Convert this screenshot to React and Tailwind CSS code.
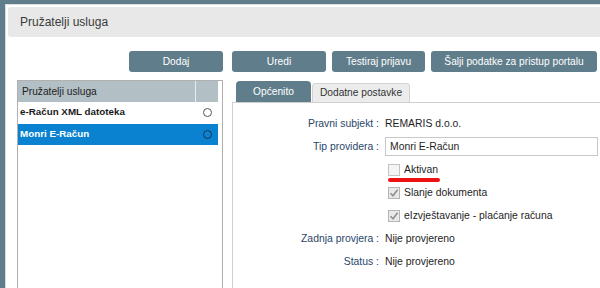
import React from 'react';

const rows = [
  { name: 'e-Račun XML datoteka', selected: false },
  { name: 'Monri E-Račun', selected: true },
];

function Checkbox({ checked }) {
  return (
    <span
      className={`w-[12px] h-[12px] border flex items-center justify-center shrink-0 ${
        checked ? 'border-[#b5b5b5] bg-[#e9e9e9]' : 'border-[#c4c4c4] bg-[#f4f4f4]'
      }`}
    >
      {checked && (
        <svg width="10" height="10" viewBox="0 0 10 10">
          <path d="M1.5 5.2 L4 7.8 L8.6 1.8" fill="none" stroke="#8f8f8f" strokeWidth="1.6" />
        </svg>
      )}
    </span>
  );
}

function Label({ children }) {
  return <div className="w-[146px] text-right text-[#2a466a] shrink-0">{children} :</div>;
}

export default function App() {
  return (
    <div className="w-[600px] h-[288px] overflow-hidden bg-[#607d8b] pl-[5px] pt-[4px] font-['Liberation_Sans',Arial,sans-serif]">
      <div className="h-[300px] bg-white border-l border-t border-[#d9dee1] pl-[2px] pt-[2px]">
        {/* Header */}
        <div className="h-[30px] bg-[#e8e8e8] rounded-l-[3px] flex items-center pl-[12px] text-[12px] text-[#3a3a3a]">
          Pružatelji usluga
        </div>

        {/* Buttons */}
        <div className="flex mt-[14px] ml-[121px] text-[10.2px] text-white">
          <button className="w-[94px] h-[21px] rounded-[3px] bg-[#607d8b]">Dodaj</button>
          <button className="w-[94px] h-[21px] rounded-[3px] bg-[#607d8b] ml-[9px]">Uredi</button>
          <button className="w-[93px] h-[21px] rounded-[3px] bg-[#607d8b] ml-[6px]">Testiraj prijavu</button>
          <button className="w-[166px] h-[21px] rounded-[3px] bg-[#607d8b] ml-[6px]">Šalji podatke za pristup portalu</button>
        </div>

        <div className="flex mt-[8px]">
          {/* Provider list */}
          <div className="ml-[9px] w-[206px] h-[220px] border border-[#b0b0b0] pr-[4px] shrink-0">
            <div className="flex h-[21px] bg-[#b2c0c6] text-[10.2px] text-[#222]">
              <div className="flex-1 flex items-center pl-[4px] border-r border-[#e6ebee]">Pružatelji usluga</div>
              <div className="w-[22px]" />
            </div>
            {rows.map((r) => (
              <div
                key={r.name}
                className={`flex items-center h-[21.5px] font-bold text-[9.8px] ${
                  r.selected ? 'bg-[#0a82cf] text-white' : 'text-[#1a1a1a]'
                }`}
              >
                <div className="flex-1 pl-[2px]">{r.name}</div>
                <div className="w-[22px] flex justify-center">
                  <span
                    className={`w-[9px] h-[9px] rounded-full border ${
                      r.selected ? 'border-[#1c3550]' : 'border-[#555] bg-white'
                    }`}
                  />
                </div>
              </div>
            ))}
          </div>

          {/* Details */}
          <div className="ml-[9px] flex-1 flex flex-col">
            <div className="flex items-end h-[22px] pl-[4px] gap-[1px] text-[10.2px]">
              <div className="w-[75px] h-[21px] rounded-t-[4px] bg-[#607d8b] text-white flex items-center justify-center">
                Općenito
              </div>
              <div className="w-[98px] h-[19px] rounded-t-[4px] bg-[#ececec] border border-b-0 border-[#d2d2d2] text-[#333] flex items-center justify-center">
                Dodatne postavke
              </div>
            </div>
            <div className="border-l border-t border-[#cfcfcf] h-[200px] pt-[9px] text-[10.4px] text-[#1e1e1e]">
              <div className="flex items-center h-[23px]">
                <Label>Pravni subjekt</Label>
                <div className="pl-[6px]">REMARIS d.o.o.</div>
              </div>
              <div className="flex items-center h-[23px]">
                <Label>Tip providera</Label>
                <div className="ml-[6px] w-[213px] h-[19px] border border-[#c8c8c8] flex items-center pl-[4px]">
                  Monri E-Račun
                </div>
              </div>
              <div className="flex items-center h-[23px] pl-[155px] gap-[4px] relative">
                <Checkbox />
                <span>Aktivan</span>
                <span className="absolute left-[155px] top-[20px] w-[52px] h-[4px] rounded-full bg-[#ee1111]" />
              </div>
              <div className="flex items-center h-[23px] pl-[155px] gap-[4px]">
                <Checkbox checked />
                <span>Slanje dokumenta</span>
              </div>
              <div className="flex items-center h-[23px] pl-[155px] gap-[4px]">
                <Checkbox checked />
                <span>eIzvještavanje - plaćanje računa</span>
              </div>
              <div className="flex items-center h-[23px]">
                <Label>Zadnja provjera</Label>
                <div className="pl-[6px]">Nije provjereno</div>
              </div>
              <div className="flex items-center h-[23px]">
                <Label>Status</Label>
                <div className="pl-[6px]">Nije provjereno</div>
              </div>
            </div>
          </div>
        </div>
      </div>
    </div>
  );
}
